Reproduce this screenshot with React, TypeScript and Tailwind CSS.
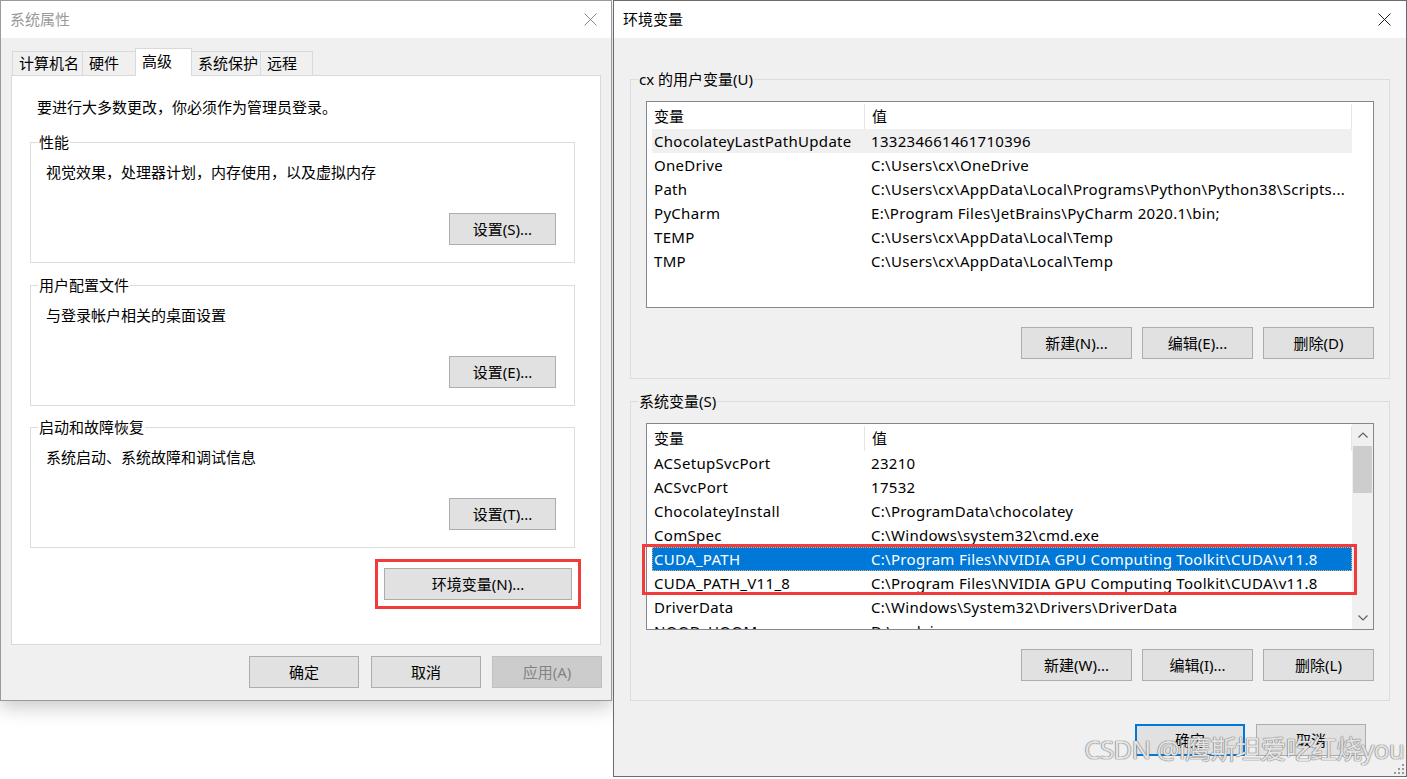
import React from 'react';

type Row = [string, string];

const userVars: Row[] = [
  ['ChocolateyLastPathUpdate', '133234661461710396'],
  ['OneDrive', 'C:\\Users\\cx\\OneDrive'],
  ['Path', 'C:\\Users\\cx\\AppData\\Local\\Programs\\Python\\Python38\\Scripts...'],
  ['PyCharm', 'E:\\Program Files\\JetBrains\\PyCharm 2020.1\\bin;'],
  ['TEMP', 'C:\\Users\\cx\\AppData\\Local\\Temp'],
  ['TMP', 'C:\\Users\\cx\\AppData\\Local\\Temp'],
];

const sysVars: Row[] = [
  ['ACSetupSvcPort', '23210'],
  ['ACSvcPort', '17532'],
  ['ChocolateyInstall', 'C:\\ProgramData\\chocolatey'],
  ['ComSpec', 'C:\\Windows\\system32\\cmd.exe'],
  ['CUDA_PATH', 'C:\\Program Files\\NVIDIA GPU Computing Toolkit\\CUDA\\v11.8'],
  ['CUDA_PATH_V11_8', 'C:\\Program Files\\NVIDIA GPU Computing Toolkit\\CUDA\\v11.8'],
  ['DriverData', 'C:\\Windows\\System32\\Drivers\\DriverData'],
  ['NOOD_HOOM', 'D:\\nodejs'],
];

function CloseIcon({ color }: { color: string }) {
  return (
    <svg width="13" height="13" viewBox="0 0 13 13">
      <path d="M0.5 0.5 L12.5 12.5 M12.5 0.5 L0.5 12.5" stroke={color} strokeWidth="1" />
    </svg>
  );
}

function Chevron({ up }: { up?: boolean }) {
  return (
    <svg width="10" height="6" viewBox="0 0 10 6">
      <path d={up ? 'M0.5 5.5 L5 1 L9.5 5.5' : 'M0.5 0.5 L5 5 L9.5 0.5'} stroke="#606060" strokeWidth="1.2" fill="none" />
    </svg>
  );
}

function Button({ label, w = 'w-[110px]', primary, disabled }: { label: string; w?: string; primary?: boolean; disabled?: boolean }) {
  const border = primary
    ? 'border-2 border-[#0078d7]'
    : disabled
      ? 'border border-[#bfbfbf]'
      : 'border border-[#adadad]';
  return (
    <div
      className={`${w} h-[32px] ${border} ${disabled ? 'bg-[#cccccc] text-[#838383]' : 'bg-[#e1e1e1] text-black'} flex items-center justify-center text-[15px] leading-none`}
    >
      {label}
    </div>
  );
}

function Group({ label, desc, button }: { label: string; desc: string; button: string }) {
  return (
    <div className="relative h-[121px] border border-[#dcdcdc] flex flex-col pt-[19px] pl-[15px] pr-[18px] pb-[17px]">
      {/* caption sits on the frame line */}
      <span className="absolute -top-[11px] left-[7px] px-[1px] bg-white text-[15px] leading-[20px]">{label}</span>
      <div className="text-[15px] leading-[20px]">{desc}</div>
      <div className="mt-auto self-end">
        <Button label={button} w="w-[107px]" />
      </div>
    </div>
  );
}

function SystemProperties() {
  const tabs = [
    { name: '计算机名', w: 'w-[71px]' },
    { name: '硬件', w: 'w-[54px]' },
    { name: '高级', w: 'w-[57px]', active: true },
    { name: '系统保护', w: 'w-[70px]' },
    { name: '远程', w: 'w-[53px]' },
  ];
  return (
    <div className="absolute left-0 top-0 w-[612px] h-[701px] border border-[#9a9a9a] bg-[#f0f0f0] flex flex-col shadow-[0_6px_18px_rgba(0,0,0,0.22)]">
      {/* Title bar */}
      <div className="h-[37px] bg-white flex items-center justify-between pl-[9px] pr-[14px]">
        <span className="text-[15px] text-[#9a9a9a]">系统属性</span>
        <CloseIcon color="#8a8a8a" />
      </div>

      <div className="flex flex-col px-[10px] pt-[10px]">
        {/* Tabs */}
        <div className="h-[27px] flex items-end ml-[1px]">
          {tabs.map((t, i) => (
            <div
              key={t.name}
              className={`${t.w} ${i > 0 ? '-ml-px' : ''} border border-b-0 border-[#d9d9d9] pl-[6px] text-[15px] flex items-center ${
                t.active ? 'relative z-10 h-[28px] -mb-px bg-white pb-[2px]' : 'h-[24px] bg-[#f0f0f0]'
              }`}
            >
              {t.name}
            </div>
          ))}
        </div>

        {/* Tab panel */}
        <div className="h-[570px] bg-white border border-[#d9d9d9] flex flex-col">
          <div className="mt-[21px] pl-[25px] text-[15px] leading-[20px]">要进行大多数更改，你必须作为管理员登录。</div>
          <div className="ml-[18px] mr-[25px] mt-[25px] flex flex-col">
            <Group label="性能" desc="视觉效果，处理器计划，内存使用，以及虚拟内存" button="设置(S)..." />
            <div className="mt-[22px]">
              <Group label="用户配置文件" desc="与登录帐户相关的桌面设置" button="设置(E)..." />
            </div>
            <div className="mt-[21px]">
              <Group label="启动和故障恢复" desc="系统启动、系统故障和调试信息" button="设置(T)..." />
            </div>
          </div>
          <div className="mt-[20px] mr-[28px] self-end relative">
            <Button label="环境变量(N)..." w="w-[188px]" />
            {/* red annotation frame */}
            <div className="absolute -inset-[9px] border-[3px] border-[#f23c3c]" />
          </div>
        </div>

        {/* Dialog buttons */}
        <div className="mt-[11px] flex justify-end -mr-[1px]">
          <Button label="确定" />
          <div className="ml-[12px]">
            <Button label="取消" />
          </div>
          <div className="ml-[11px]">
            <Button label="应用(A)" disabled />
          </div>
        </div>
      </div>
    </div>
  );
}

function VarList({ rows, hoverIndex, selectedIndex, scroll, annotate }: {
  rows: Row[];
  hoverIndex?: number;
  selectedIndex?: number;
  scroll?: boolean;
  annotate?: boolean;
}) {
  return (
    <div className="relative">
      <div className="h-[207px] border border-[#828790] bg-white flex overflow-hidden">
        <div className="ml-[5px] w-[700px] flex flex-col">
          {/* Header */}
          <div className="h-[27px] shrink-0 flex text-[15px] pt-[2px]">
            <div className="w-[212px] pl-[2px] flex items-center">变量</div>
            <div className="flex-1 pl-[7px] flex items-center border-l border-r border-[#e5e5e5]">值</div>
          </div>
          {rows.map(([k, v], i) => {
            const sel = i === selectedIndex;
            const hov = i === hoverIndex;
            return (
              <div
                key={k}
                className={`h-[24px] shrink-0 flex text-[15px] leading-[24px] tracking-[0.3px] whitespace-nowrap ${
                  sel ? 'bg-[#0078d7] text-white outline-1 outline-dotted outline-[#d9b37a] -outline-offset-1' : hov ? 'bg-[#f0f0f0]' : ''
                }`}
              >
                <div className="w-[212px] pl-[2px] overflow-hidden">{k}</div>
                <div className="flex-1 pl-[7px] overflow-hidden">{v}</div>
              </div>
            );
          })}
        </div>
        {scroll ? (
          <div className="w-[21px] ml-auto bg-[#f0f0f0] flex flex-col items-center">
            <div className="h-[22px] flex items-center justify-center">
              <Chevron up />
            </div>
            <div className="w-[19px] h-[47px] bg-[#cdcdcd]" />
            <div className="flex-1" />
            <div className="h-[22px] flex items-center justify-center">
              <Chevron />
            </div>
          </div>
        ) : null}
      </div>
      {annotate ? <div className="absolute left-[-4px] top-[121px] w-[715px] h-[51px] border-[3px] border-[#f23c3c]" /> : null}
    </div>
  );
}

function VarGroup({ label, children, buttons }: { label: string; children: React.ReactNode; buttons: string[] }) {
  return (
    <div className="relative h-[300px] border border-[#dcdcdc] pt-[21px] px-[15px] pb-[19px] flex flex-col">
      <span className="absolute -top-[11px] left-[7px] px-[1px] bg-[#f0f0f0] text-[15px] leading-[20px]">{label}</span>
      {children}
      <div className="mt-[19px] flex justify-end gap-[10px]">
        {buttons.map((b) => (
          <Button key={b} label={b} w="w-[111px]" />
        ))}
      </div>
    </div>
  );
}

function EnvironmentVariables() {
  return (
    <div className="absolute left-[613px] top-0 w-[794px] h-[777px] border border-[#6b6b6b] bg-[#f0f0f0] flex flex-col">
      {/* Title bar */}
      <div className="h-[37px] bg-white flex items-center justify-between pl-[9px] pr-[15px]">
        <span className="text-[15px] text-black">环境变量</span>
        <CloseIcon color="#1a1a1a" />
      </div>

      <div className="px-[16px] pt-[41px] flex flex-col">
        <VarGroup label="cx 的用户变量(U)" buttons={['新建(N)...', '编辑(E)...', '删除(D)']}>
          <VarList rows={userVars} hoverIndex={0} />
        </VarGroup>
        <div className="mt-[22px]">
          <VarGroup label="系统变量(S)" buttons={['新建(W)...', '编辑(I)...', '删除(L)']}>
            <VarList rows={sysVars} selectedIndex={4} scroll annotate />
          </VarGroup>
        </div>
        <div className="mt-[23px] mr-[24px] flex justify-end gap-[11px]">
          <Button label="确定" primary />
          <Button label="取消" />
        </div>
      </div>

      {/* size grip */}
      <svg className="absolute right-[1px] bottom-[1px]" width="11" height="11" viewBox="0 0 11 11">
        {[
          [8, 0],
          [4, 4],
          [8, 4],
          [0, 8],
          [4, 8],
          [8, 8],
        ].map(([x, y]) => (
          <rect key={`${x}-${y}`} x={x} y={y} width="2" height="2" fill="#9a9a9a" />
        ))}
      </svg>
    </div>
  );
}

export default function App() {
  return (
    <div className="relative w-[1407px] h-[779px] bg-white overflow-hidden text-black font-['Noto_Sans','Noto_Sans_CJK_SC',sans-serif]">
      <SystemProperties />
      <EnvironmentVariables />
      {/* watermark */}
      <div className="absolute right-[3px] top-[729px] text-[26px] leading-[40px] tracking-[-0.8px] text-white/80 whitespace-nowrap [text-shadow:0_0_1px_#777,0_0_1px_#777,0_0_1px_#777]">
        CSDN @i鹰斯坦爱吃红烧you
      </div>
    </div>
  );
}
